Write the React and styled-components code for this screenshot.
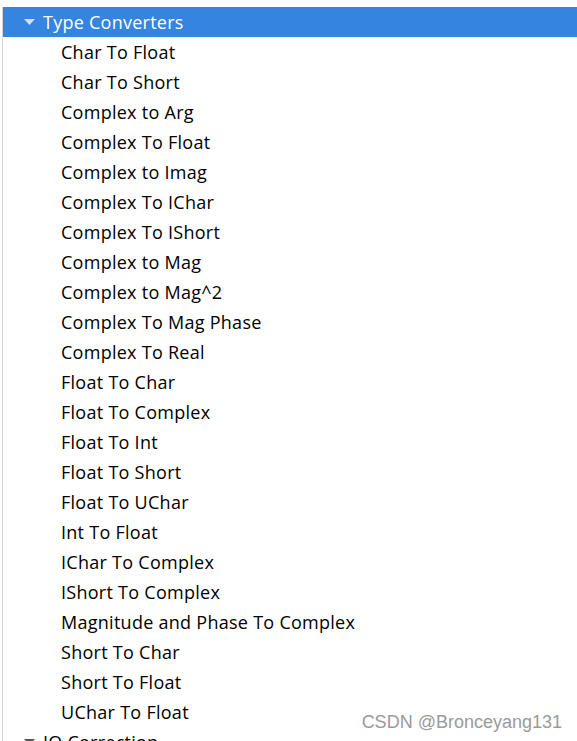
import styled, { createGlobalStyle } from "styled-components";

const GlobalStyle = createGlobalStyle`
  html, body {
    margin: 0;
    padding: 0;
    background: #fff;
    overflow: hidden;
  }
`;

const converters = [
  "Char To Float",
  "Char To Short",
  "Complex to Arg",
  "Complex To Float",
  "Complex to Imag",
  "Complex To IChar",
  "Complex To IShort",
  "Complex to Mag",
  "Complex to Mag^2",
  "Complex To Mag Phase",
  "Complex To Real",
  "Float To Char",
  "Float To Complex",
  "Float To Int",
  "Float To Short",
  "Float To UChar",
  "Int To Float",
  "IChar To Complex",
  "IShort To Complex",
  "Magnitude and Phase To Complex",
  "Short To Char",
  "Short To Float",
  "UChar To Float",
];

function Arrow({ color }) {
  return (
    <svg width="11" height="6" viewBox="0 0 11 6">
      <path d="M0 0 L11 0 L5.5 6 Z" fill={color} />
    </svg>
  );
}

function App() {
  return (
    <Page>
      <GlobalStyle />
      <Tree>
        <Category selected>
          <Toggle>
            <Arrow color="#cfe0f7" />
          </Toggle>
          <span>Type Converters</span>
        </Category>
        {converters.map((name) => (
          <Item key={name}>{name}</Item>
        ))}
        <Category>
          <Toggle>
            <Arrow color="#555" />
          </Toggle>
          <span>IQ Correction</span>
        </Category>
      </Tree>
      <Watermark>CSDN @Bronceyang131</Watermark>
    </Page>
  );
}

const Page = styled.div`
  position: relative;
  width: 577px;
  height: 741px;
  overflow: hidden;
  padding: 7px 0 0 2px;
  box-sizing: border-box;
  font-family: "Open Sans", "Noto Sans", sans-serif;
`;

const Tree = styled.div`
  display: flex;
  flex-direction: column;
  border-left: 1px solid #d4d4d4;
  min-height: 100%;
`;

const Category = styled.div`
  display: flex;
  align-items: center;
  height: 30px;
  flex-shrink: 0;
  font-size: 18px;
  letter-spacing: 0.25px;
  background: ${(p) => (p.selected ? "#3584e0" : "transparent")};
  color: ${(p) => (p.selected ? "#fff" : "#000")};
`;

const Toggle = styled.span`
  display: flex;
  align-items: center;
  justify-content: center;
  width: 11px;
  margin: 0 8px 0 21px;
`;

const Item = styled.div`
  display: flex;
  align-items: center;
  height: 30px;
  flex-shrink: 0;
  padding-left: 58px;
  font-size: 18px;
  letter-spacing: 0.27px;
  color: #000;
`;

const Watermark = styled.div`
  position: absolute;
  right: 15px;
  bottom: 8px;
  font-family: "Liberation Sans", Arial, sans-serif;
  font-size: 18px;
  color: #9a9a9a;
`;

export default App;
